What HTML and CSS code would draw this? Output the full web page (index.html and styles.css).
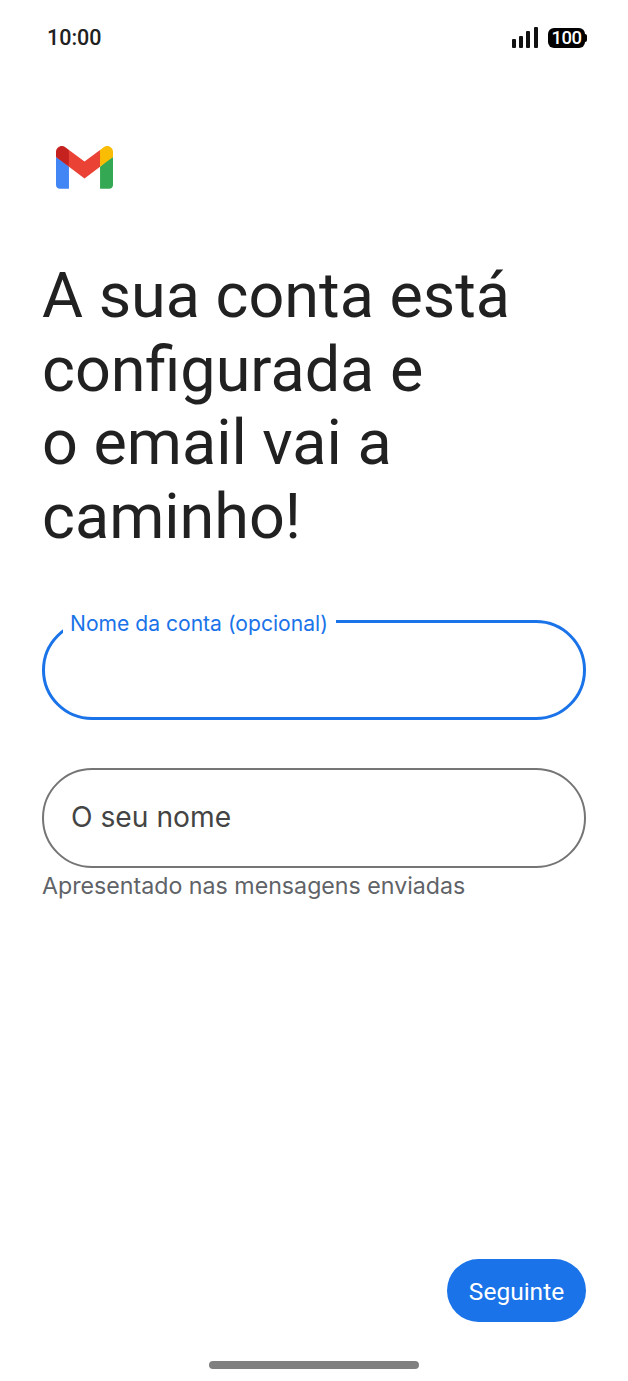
FILE: index.html
```html
<!DOCTYPE html>
<html lang="pt">
<head>
    <meta charset="UTF-8">
    <meta name="viewport" content="width=device-width, initial-scale=1.0">
    <title>Gmail</title>
    <link rel="stylesheet" href="styles.css">
</head>
<body>
    <div class="status-bar">
        <span class="time">10:00</span>
        <div class="status-icons">
            <svg class="signal" width="26" height="21" viewBox="0 0 26 21">
                <rect x="0" y="12" width="4" height="9" rx="1"/>
                <rect x="7" y="9" width="4" height="12" rx="1"/>
                <rect x="14" y="4" width="4" height="17" rx="1"/>
                <rect x="22" y="0" width="4" height="21" rx="1"/>
            </svg>
            <div class="battery"><span class="battery-level">100</span></div>
        </div>
    </div>

    <main class="content">
        <svg class="logo" width="57" height="43" viewBox="0 0 256 193">
            <path fill="#4285F4" d="M58.182 192.05V93.14L27.507 65.077 0 49.504v125.091c0 9.658 7.825 17.455 17.455 17.455h40.727Z"/>
            <path fill="#34A853" d="M197.818 192.05h40.727c9.659 0 17.455-7.826 17.455-17.455V49.505l-31.156 17.837-27.026 25.798v98.91Z"/>
            <path fill="#EA4335" d="m58.182 93.14-4.174-38.647 4.174-36.989L128 69.868l69.818-52.364 4.669 34.992-4.669 40.644L128 145.504z"/>
            <path fill="#FBBC04" d="M197.818 17.504V93.14L256 49.504V26.231c0-21.585-24.64-33.89-41.89-20.945l-16.292 12.218Z"/>
            <path fill="#C5221F" d="m0 49.504 26.759 20.07L58.182 93.14V17.504L41.89 5.286C24.61-7.66 0 4.646 0 26.23v23.273Z"/>
        </svg>

        <h1 class="title">A sua conta está<br>configurada e<br>o email vai a<br>caminho!</h1>

        <div class="field field-active">
            <span class="field-label">Nome da conta (opcional)</span>
        </div>

        <div class="field field-idle">
            <span class="field-placeholder">O seu nome</span>
        </div>
        <p class="helper">Apresentado nas mensagens enviadas</p>
    </main>

    <div class="actions">
        <button class="next-btn">Seguinte</button>
    </div>
    <div class="home-bar"></div>
</body>
</html>
```

FILE: styles.css
```css
* {
    box-sizing: border-box;
}

body {
    font-family: Roboto, "Liberation Sans", sans-serif;
    background-color: #fff;
    color: #212121;
    margin: 0;
    height: 1381px;
    display: flex;
    flex-direction: column;
}

.status-bar {
    display: flex;
    justify-content: space-between;
    align-items: center;
    height: 21px;
    margin-top: 27px;
    padding: 0 43px 0 47px;
}

.time {
    font-size: 21.5px;
    font-weight: 500;
}

.status-icons {
    display: flex;
    align-items: center;
    gap: 10px;
}

.signal {
    fill: #111;
}

.battery {
    position: relative;
    width: 37px;
    height: 20px;
    background-color: #000;
    border-radius: 6px;
    display: flex;
    align-items: center;
    justify-content: center;
}

.battery::after {
    content: "";
    position: absolute;
    right: -2px;
    top: 6px;
    width: 2px;
    height: 8px;
    background-color: #000;
    border-radius: 0 2px 2px 0;
}

.battery-level {
    color: #fff;
    font-size: 18.5px;
    font-weight: 500;
    letter-spacing: -0.5px;
}

.content {
    flex: 1;
    padding: 0 42px;
}

.logo {
    display: block;
    margin: 98px 0 0 14px;
}

.title {
    font-size: 62.9px;
    font-weight: 400;
    line-height: 73.5px;
    margin: 70px 0 0;
}

.field {
    position: relative;
    height: 100px;
    border-radius: 50px;
    display: flex;
    align-items: center;
}

.field-active {
    border: 3px solid #1a73e8;
    margin-top: 67px;
}

.field-label {
    position: absolute;
    left: 18px;
    top: -12px;
    padding: 0 8px 0 7px;
    background-color: #fff;
    color: #1a73e8;
    font-family: Inter, Roboto, sans-serif;
    font-size: 21.1px;
    line-height: 26px;
}

.field-idle {
    border: 2px solid #757575;
    margin-top: 48px;
    padding: 0 0 2px 27px;
}

.field-placeholder {
    color: #444;
    font-family: Inter, Roboto, sans-serif;
    font-size: 28.2px;
}

.helper {
    color: #5f6368;
    font-family: Inter, Roboto, sans-serif;
    font-size: 23.2px;
    line-height: 30px;
    margin: 3px 0 0;
}

.actions {
    display: flex;
    justify-content: flex-end;
    padding-right: 42px;
}

.next-btn {
    width: 139px;
    height: 63px;
    border: none;
    border-radius: 32px;
    background-color: #1a73e8;
    color: #fff;
    font-family: inherit;
    font-size: 24.5px;
    padding: 1px 0 0;
}

.home-bar {
    width: 210px;
    height: 8px;
    margin: 39px auto 12px;
    background-color: #808080;
    border-radius: 4px;
}
```
